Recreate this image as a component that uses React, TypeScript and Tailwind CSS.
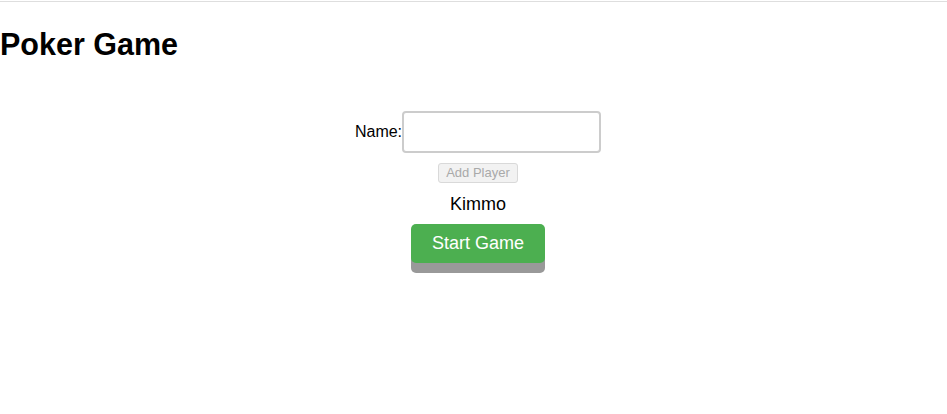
import React, { useState } from "react";

const App: React.FC = () => {
  const [name, setName] = useState("");
  const [players, setPlayers] = useState<string[]>(["Kimmo"]);

  const addPlayer = () => {
    if (!name.trim()) return;
    setPlayers([...players, name.trim()]);
    setName("");
  };

  return (
    <div className="min-h-screen bg-white text-black font-['Liberation_Sans',Arial,sans-serif]">
      <div className="h-px mt-px bg-[#dedede]" />
      <h1 className="mt-[24px] text-[30.5px] leading-[36px] font-bold">Poker Game</h1>

      {/* Player form */}
      <div className="mt-[49px] pl-[9px] flex flex-col items-center">
        <div className="flex items-center">
          <label className="text-[16px]">Name:</label>
          <input
            type="text"
            value={name}
            onChange={(e) => setName(e.target.value)}
            className="w-[199px] h-[42px] px-2 border-2 border-[#cccccc] rounded-[4px] text-[16px] outline-none"
          />
        </div>
        <button
          onClick={addPlayer}
          disabled={!name.trim()}
          className="mt-[10px] h-[20px] px-[7px] text-[13px] leading-[16px] text-[#a9a9a9] bg-[#f2f2f2] border border-[#d9d9d9] rounded-[3px]"
        >
          Add Player
        </button>
        <ul className="mt-[10px]">
          {players.map((p) => (
            <li key={p} className="text-[18px] leading-[22px] text-center">
              {p}
            </li>
          ))}
        </ul>
        <button className="mt-[9px] h-[39px] px-[20.5px] text-[18px] text-white bg-[#4caf50] rounded-[5px] shadow-[0_10px_0_#999999]">
          Start Game
        </button>
      </div>
    </div>
  );
};

export default App;
